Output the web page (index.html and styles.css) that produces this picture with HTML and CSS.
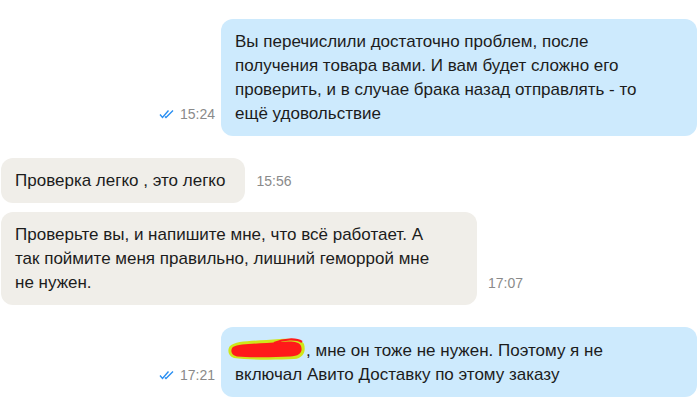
FILE: index.html
```html
<!DOCTYPE html>
<html>
    <head>
        <meta charset="utf-8" />
        <title>Сообщения</title>
        <link rel="stylesheet" href="styles.css">
    </head>
    <body>
        <div class="chat">
            <div class="row out">
                <div class="meta">
                    <svg class="read" width="16" height="10" viewBox="0 0 16 10"><path d="M1 5.5 L3.5 8.5 L9.5 1.5 M6 7.5 L7 8.5 L14 1.5" fill="none" stroke="#2a8ff2" stroke-width="1.4"/></svg>
                    <span class="time">15:24</span>
                </div>
                <div class="bubble">Вы перечислили достаточно проблем, после получения товара вами. И вам будет сложно его проверить, и в случае брака назад отправлять - то ещё удовольствие</div>
            </div>

            <div class="row in first">
                <div class="bubble short">Проверка легко , это легко</div>
                <div class="meta"><span class="time">15:56</span></div>
            </div>
            <div class="row in">
                <div class="bubble">Проверьте вы, и напишите мне, что всё работает. А так поймите меня правильно, лишний геморрой мне не нужен.</div>
                <div class="meta"><span class="time">17:07</span></div>
            </div>

            <div class="row out first">
                <div class="meta">
                    <svg class="read" width="16" height="10" viewBox="0 0 16 10"><path d="M1 5.5 L3.5 8.5 L9.5 1.5 M6 7.5 L7 8.5 L14 1.5" fill="none" stroke="#2a8ff2" stroke-width="1.4"/></svg>
                    <span class="time">17:21</span>
                </div>
                <div class="bubble"><span class="redact"><svg width="78" height="22" viewBox="0 0 78 22"><path d="M2 8 C8 2 30 3 52 1 C64 0 74 1 76 6 C78 13 76 20 66 21 C48 22 20 22 6 20 C0 18 -1 12 2 8 Z" fill="#cfe61a"/><path d="M5 9 C12 5 34 6 52 4 C62 3 71 3 73 8 C75 14 72 18 62 18.5 C44 19.5 22 19.5 9 18.5 C3 17.5 2 12 5 9 Z" fill="#ff1a1a"/><path d="M46 5 C56 1 68 0 74 4" fill="none" stroke="#ff1a1a" stroke-width="2.2"/></svg></span>, мне он тоже не нужен. Поэтому я не включал Авито Доставку по этому заказу</div>
            </div>
        </div>
    </body>
</html>
```

FILE: styles.css
```css
body {
    margin: 0;
    background: #fff;
    font-family: "Liberation Sans", Arial, sans-serif;
    color: #1c1c1c;
}

.chat {
    display: flex;
    flex-direction: column;
    gap: 9px;
    padding: 19px 3px 0 1px;
}

.row {
    display: flex;
    align-items: flex-end;
}

.row.first {
    margin-top: 13px;
}

.row.out {
    justify-content: flex-end;
}

.bubble {
    max-width: 422px;
    padding: 11px 40px 10px 14px;
    border-radius: 12px;
    font-size: 17px;
    line-height: 24px;
}

.bubble.short {
    padding-right: 20px;
}

.out .bubble {
    background: #cdeafd;
}

.in .bubble {
    background: #f0eee9;
}

.meta {
    display: flex;
    align-items: center;
    gap: 5px;
    padding-bottom: 10px;
    line-height: 24px;
}

.out .meta {
    margin-right: 6px;
}

.in .meta {
    margin-left: 11px;
}

.time {
    font-size: 14px;
    color: #8a8a8a;
}

.read {
    display: block;
}

.redact {
    display: inline-block;
    width: 78px;
    height: 22px;
    vertical-align: -4px;
    margin-left: -7px;
}

.redact svg {
    display: block;
}
```
